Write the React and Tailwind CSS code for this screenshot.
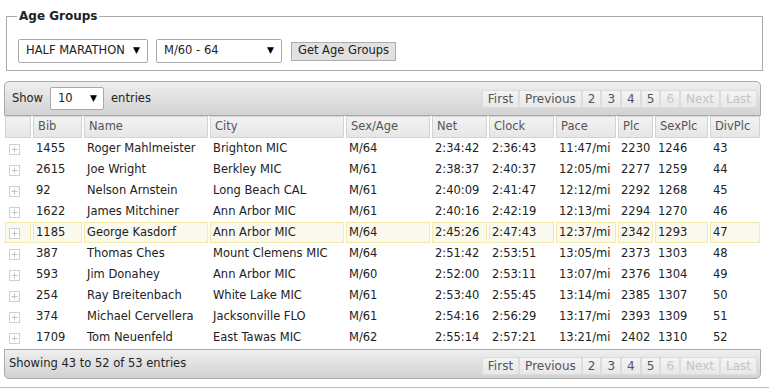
import React from 'react';

const rows = [
  ['1455', 'Roger Mahlmeister', 'Brighton MIC', 'M/64', '2:34:42', '2:36:43', '11:47/mi', '2230', '1246', '43'],
  ['2615', 'Joe Wright', 'Berkley MIC', 'M/61', '2:38:37', '2:40:37', '12:05/mi', '2277', '1259', '44'],
  ['92', 'Nelson Arnstein', 'Long Beach CAL', 'M/61', '2:40:09', '2:41:47', '12:12/mi', '2292', '1268', '45'],
  ['1622', 'James Mitchiner', 'Ann Arbor MIC', 'M/61', '2:40:16', '2:42:19', '12:13/mi', '2294', '1270', '46'],
  ['1185', 'George Kasdorf', 'Ann Arbor MIC', 'M/64', '2:45:26', '2:47:43', '12:37/mi', '2342', '1293', '47'],
  ['387', 'Thomas Ches', 'Mount Clemens MIC', 'M/64', '2:51:42', '2:53:51', '13:05/mi', '2373', '1303', '48'],
  ['593', 'Jim Donahey', 'Ann Arbor MIC', 'M/60', '2:52:00', '2:53:11', '13:07/mi', '2376', '1304', '49'],
  ['254', 'Ray Breitenbach', 'White Lake MIC', 'M/61', '2:53:40', '2:55:45', '13:14/mi', '2385', '1307', '50'],
  ['374', 'Michael Cervellera', 'Jacksonville FLO', 'M/61', '2:54:16', '2:56:29', '13:17/mi', '2393', '1309', '51'],
  ['1709', 'Tom Neuenfeld', 'East Tawas MIC', 'M/62', '2:55:14', '2:57:21', '13:21/mi', '2402', '1310', '52'],
];

const cols = [
  { label: '', w: 'w-[26px]' },
  { label: 'Bib', w: 'w-[49px]' },
  { label: 'Name', w: 'w-[124px]' },
  { label: 'City', w: 'w-[134px]' },
  { label: 'Sex/Age', w: 'w-[84px]' },
  { label: 'Net', w: 'w-[55px]' },
  { label: 'Clock', w: 'w-[65px]' },
  { label: 'Pace', w: 'w-[60px]' },
  { label: 'Plc', w: 'w-[35px]' },
  { label: 'SexPlc', w: 'w-[53px]' },
  { label: 'DivPlc', w: 'w-[50px]' },
];

const Arrow = () => <span className="text-[9px] text-black">▼</span>;

const PlusIcon = () => (
  <svg width="11" height="11" viewBox="0 0 11 11" className="block">
    <rect x="0.5" y="0.5" width="10" height="10" fill="#fff" stroke="#cfcfcf" />
    <path d="M5.5 2.5v6M2.5 5.5h6" stroke="#c4c4c4" strokeWidth="1" />
  </svg>
);

const Pager = () => {
  const btn = 'h-[18px] px-[5px] flex items-center border border-[#dcdcdc] bg-gradient-to-b from-[#f4f4f4] to-[#e8e8e8]';
  return (
    <div className="flex text-[12px] leading-none">
      <span className={btn + ' text-[#555]'}>First</span>
      <span className={btn + ' text-[#555]'}>Previous</span>
      <span className={btn + ' text-[#555]'}>2</span>
      <span className={btn + ' text-[#555]'}>3</span>
      <span className={btn + ' text-[#555]'}>4</span>
      <span className={btn + ' text-[#555]'}>5</span>
      <span className={btn + ' text-[#c4c4c4]'}>6</span>
      <span className={btn + ' text-[#c4c4c4]'}>Next</span>
      <span className={btn + ' text-[#c4c4c4]'}>Last</span>
    </div>
  );
};

const App = () => {
  return (
    <div className="w-[769px] h-[390px] bg-white overflow-hidden font-['DejaVu_Sans',Verdana,sans-serif] text-[11.5px] text-[#222]">
      <fieldset className="mx-[6px] mt-[7px] border border-[#aaa] px-[11px] pb-[8px] h-[64px]">
        <legend className="px-[2px] -ml-[1px] font-bold text-[12px] text-[#222]">Age Groups</legend>
        <div className="flex items-center mt-[14px]">
          <div className="w-[130px] h-[24px] border border-[#a9a9a9] rounded-[2px] flex items-center justify-between pl-[7px] pr-[7px]">
            <span>HALF MARATHON</span>
            <Arrow />
          </div>
          <div className="ml-[8px] w-[126px] h-[24px] border border-[#a9a9a9] rounded-[2px] flex items-center justify-between pl-[7px] pr-[7px]">
            <span>M/60 - 64</span>
            <Arrow />
          </div>
          <div className="ml-[9px] h-[19px] w-[105px] justify-center border border-[#adadad] bg-[#e1e1e1] flex items-center">
            Get Age Groups
          </div>
        </div>
      </fieldset>

      <div className="mx-[4px] mt-[10px] w-[757px]">
        <div className="h-[35px] rounded-t-[5px] border border-[#aaa] bg-gradient-to-b from-[#efefef] to-[#d2d2d2] flex items-center justify-between pl-[7px] pr-[3px]">
          <div className="flex items-center text-[#222]">
            <span>Show</span>
            <div className="ml-[7px] w-[54px] h-[23px] border border-[#a9a9a9] rounded-[2px] bg-white flex items-center justify-between pl-[7px] pr-[6px]">
              <span>10</span>
              <Arrow />
            </div>
            <span className="ml-[7px]">entries</span>
          </div>
          <Pager />
        </div>

        <table className="table-fixed border-separate [border-spacing:2px_0] -mx-[1px] w-[759px]">
          <thead>
            <tr>
              {cols.map((c, i) => (
                <th
                  key={i}
                  className={c.w + ' h-[22px] border border-[#d3d3d3] bg-gradient-to-b from-[#f3f3f3] to-[#e6e6e6] text-left font-normal text-[#555] px-[4px] py-0'}
                >
                  {c.label}
                </th>
              ))}
            </tr>
          </thead>
          <tbody>
            {rows.map((r, ri) => {
              const hl = ri === 4;
              const td = hl
                ? 'h-[21px] border border-[#f4e9a6] bg-[#fbf9ee] px-[2px] pt-[1px] pb-0 whitespace-nowrap'
                : 'h-[21px] border border-transparent px-[2px] pt-[1px] pb-0 whitespace-nowrap';
              return (
                <tr key={ri}>
                  <td className={td + ' pl-[3px]'}>
                    <PlusIcon />
                  </td>
                  {r.map((v, ci) => (
                    <td key={ci} className={td}>
                      {v}
                    </td>
                  ))}
                </tr>
              );
            })}
          </tbody>
        </table>

        <div className="mt-[1px] h-[30px] rounded-b-[5px] border border-[#aaa] bg-gradient-to-b from-[#efefef] to-[#d2d2d2] flex items-center justify-between pl-[4px] pr-[3px]">
          <span className="text-[#222]">Showing 43 to 52 of 53 entries</span>
          <div className="mt-[4px]">
            <Pager />
          </div>
        </div>
      </div>
      <div className="mt-[8px] border-t border-[#bbb]" />
    </div>
  );
};

export default App;
